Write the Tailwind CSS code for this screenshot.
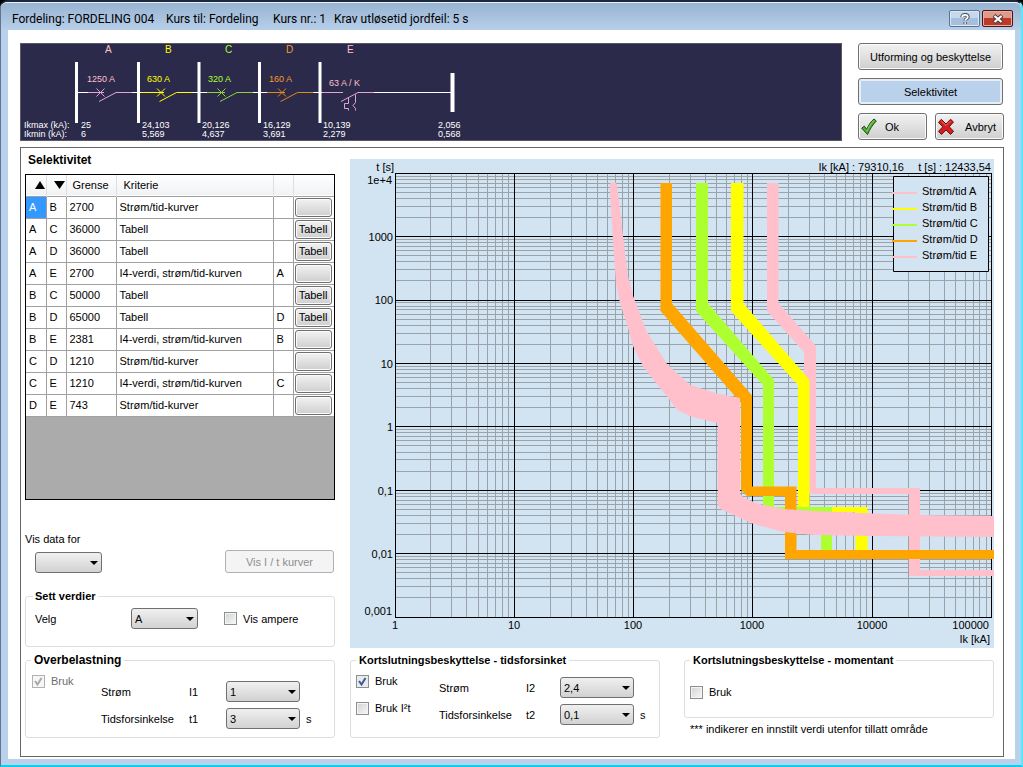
<!DOCTYPE html>
<html lang="no">
<head>
<meta charset="utf-8">
<title>Selektivitet</title>
<script src="https://cdn.jsdelivr.net/npm/@tailwindcss/browser@4"></script>
</head>
<body class="flex min-h-screen flex-col bg-black font-['Liberation_Sans',Arial,sans-serif] text-[11px] leading-[14px] text-black">
<div class="mb-px flex flex-1 flex-col rounded-t-lg border-t-2 border-r-2 border-b-2 border-l border-t-slate-800 border-r-cyan-300 border-b-cyan-400 border-l-slate-500 bg-[#b9d1ea]">
  <header class="flex h-7 items-center rounded-t-md border-t border-white/70 bg-linear-to-b from-[#98b4d2] to-[#b7cfe9] pr-2 pl-[11px]">
    <h1 class="flex flex-1 pt-1 font-[Roboto,'Noto_Sans',sans-serif] text-xs whitespace-nowrap">
      <span class="w-[154px]">Fordeling: FORDELING 004</span>
      <span class="w-[107px]">Kurs til: Fordeling</span>
      <span class="w-[61px]">Kurs nr.: 1</span>
      <span>Krav utløsetid jordfeil: 5 s</span>
    </h1>
    <div class="mt-[7px] flex gap-0.5 self-start">
      <button type="button" aria-label="Hjelp" class="flex h-[17px] w-[31px] items-center justify-center rounded-xs border border-[#5c7390] bg-linear-to-b from-[#c5d8ec] from-50% to-[#a5bfdc] to-50% shadow-[inset_0_0_0_1px_#dbe8f5]">
        <svg class="h-3 w-3" viewBox="0 0 12 12" fill="none"><path d="M3 4.200C3 2.500 4.300 1.700 6 1.700s3 .9 3 2.400C9 5.700 6.200 5.700 6.200 7.600M6.200 9v2" stroke="#3f4c5e" stroke-width="3.400"/><path d="M3.200 4.200C3.200 2.600 4.400 1.800 6 1.800s2.800.8 2.800 2.300C8.800 5.700 6.200 5.700 6.200 7.400M6.200 9.200v1.600" stroke="#fff" stroke-width="1.800"/></svg>
      </button>
      <button type="button" aria-label="Lukk" class="flex h-[17px] w-[31px] items-center justify-center rounded-xs border border-[#4b1510] bg-linear-to-b from-[#de9a8c] from-45% to-[#bc3a26] to-50% shadow-[inset_0_0_0_1px_#e9aea2]">
        <svg class="h-3 w-3" viewBox="0 0 12 12" fill="none"><path d="M2 2.500l8 7M10 2.500l-8 7" stroke="#4a3a40" stroke-width="4"/><path d="M2.500 3l7 6M9.500 3l-7 6" stroke="#fff" stroke-width="2.200"/></svg>
      </button>
    </div>
  </header>

  <main class="mr-[6px] mb-[6px] ml-[7px] flex-1 bg-white pt-[13px] pr-[11px] pb-0.5 pl-3">
    <div class="flex gap-4">
      <div class="min-w-0 flex-1 border border-[#5a5a66] bg-[#2c2a4a]">
        <svg class="block h-24 w-[820px]" viewBox="21 44 820 96" font-family="'Liberation Sans',Arial,sans-serif" font-size="9" role="img" aria-label="Enlinjeskjema">
          <g fill="#ffc0cb"><text x="105" y="53" font-size="10">A</text><text x="87" y="82">1250 A</text><text x="347" y="53" font-size="10">E</text><text x="329" y="86">63 A / K</text></g>
          <g fill="#ff0"><text x="165" y="53" font-size="10">B</text><text x="147" y="82">630 A</text></g>
          <g fill="#adff2f"><text x="225" y="53" font-size="10">C</text><text x="208" y="82">320 A</text></g>
          <g fill="#f59a2c"><text x="286" y="53" font-size="10">D</text><text x="269" y="82">160 A</text></g>
          <path d="M78 92.500h12M124 92.500h28M184 92.500h28M246 92.500h28M304 92.500h28M372 92.500h80" stroke="#fff"/>
          <g fill="none">
            <path d="M88 92.500h16M96.500 88.500l8 8M104.500 88.500l-8 8M99 101.500l17-9h16" stroke="#e0a6cf"/>
            <path d="M141 92.500h23M157 88.500l8 8M165 88.500l-8 8M159.500 101.500l17-9h16" stroke="#ff0"/>
            <path d="M207 92.500h18M217.500 88.500l8 8M225.500 88.500l-8 8M220 101.500l17-9h16" stroke="#8fd13a"/>
            <path d="M267 92.500h18M278 88.500l8 8M286 88.500l-8 8M280.500 101.500l17-9h16" stroke="#e08a1c"/>
            <path d="M322 92.500h21M341 101.500l17-9h16M348.500 98v5.500h-4v5h4v2M355.500 94.500v8l-2.500 3 2.500 3v2" stroke="#e0a6cf"/>
          </g>
          <path d="M76.500 62v61M138.500 62v61M199 62v61M259.500 62v61M320 62v61" stroke="#fff" stroke-width="3"/>
          <path d="M452.500 73v39" stroke="#fff" stroke-width="4"/>
          <g fill="#fff">
            <text x="24" y="128">Ikmax (kA):</text><text x="81" y="128">25</text><text x="142" y="128">24,103</text><text x="202" y="128">20,126</text><text x="263" y="128">16,129</text><text x="323" y="128">10,139</text><text x="438" y="128">2,056</text>
            <text x="24" y="137">Ikmin (kA):</text><text x="81" y="137">6</text><text x="142" y="137">5,569</text><text x="202" y="137">4,637</text><text x="263" y="137">3,691</text><text x="323" y="137">2,279</text><text x="438" y="137">0,568</text>
          </g>
        </svg>
      </div>
      <div class="grid w-[146px] shrink-0 grid-cols-2 grid-rows-[27px_27px_27px] gap-x-2 gap-y-2">
        <button type="button" class="col-span-2 mr-px rounded-[3px] border border-[#707070] bg-linear-to-b from-[#f2f2f2] to-[#cfcfcf] shadow-[inset_0_0_0_1px_#fbfbfb]">Utforming og beskyttelse</button>
        <button type="button" class="col-span-2 mr-px rounded-[3px] border border-[#707070] bg-[#b9d1ea] shadow-[inset_0_0_0_2px_#e6eef6]">Selektivitet</button>
        <button type="button" class="flex items-center gap-2 rounded-[3px] border border-[#707070] bg-linear-to-b from-[#f2f2f2] to-[#cfcfcf] pl-0.5 shadow-[inset_0_0_0_1px_#fbfbfb]">
          <svg class="h-[18px] w-4" viewBox="0 0 16 18"><path d="M.7 10.200l2.600-2 2.500 3.200C7.500 7.300 9.800 3.500 13 1l2.300 2C11.500 6.800 9 11 6.500 16.500z" fill="#4fae33" stroke="#1d4d12" stroke-linejoin="round"/><path d="M5.800 13.500C8 8.500 10 5 13 2.500" stroke="#8cd66b" fill="none"/></svg>
          Ok
        </button>
        <button type="button" class="flex items-center justify-between rounded-[3px] border border-[#707070] bg-linear-to-b from-[#f2f2f2] to-[#cfcfcf] pr-[7px] pl-0.5 shadow-[inset_0_0_0_1px_#fbfbfb]">
          <svg class="h-[18px] w-4" viewBox="0 0 16 18"><path d="M3.300 1.300L8 6l4.500-4.700L15.500 4l-4.300 4.800 4.400 4.400-3 3.200L8 12l-4.500 4.400-3-3 4.300-4.600L.5 4.500z" fill="#d3201f" stroke="#6b0b0b" stroke-linejoin="round"/><path d="M3.400 3L8 7.500 12.500 3" stroke="#ee7468" fill="none"/></svg>
          Avbryt
        </button>
      </div>
    </div>

    <section class="mt-1.5 grid grid-cols-[310px_minmax(0,1fr)] gap-x-[15px] border border-[#666] pt-[5px] pr-[9px] pb-[18px] pl-1">
      <div class="flex flex-col">
        <h2 class="mb-[7px] pl-[3px] text-xs leading-[14px] font-bold">Selektivitet</h2>
        <div class="h-[326px] border border-black bg-[#ababab]">
          <table class="w-full table-fixed border-collapse bg-white text-left">
            <colgroup><col class="w-5"><col class="w-5"><col class="w-[50px]"><col><col class="w-5"><col class="w-[41px]"></colgroup>
            <thead>
              <tr class="h-[21px] border-b border-[#a0a0a0] bg-linear-to-b from-white to-[#f1f2f4]">
                <th scope="col" class="border-r border-[#dedfe1] pl-2"><svg class="h-2 w-3" viewBox="0 0 12 8" role="img" aria-label="Overordnet"><path d="M1 8l5-8 5 8z"/></svg></th>
                <th scope="col" class="border-r border-[#dedfe1] pl-[6px]"><svg class="h-2 w-3" viewBox="0 0 12 8" role="img" aria-label="Underordnet"><path d="M1 0h11L6.500 8z"/></svg></th>
                <th scope="col" class="border-r border-[#dedfe1] pl-[6px] font-normal">Grense</th>
                <th scope="col" class="border-r border-[#dedfe1] pl-[7px] font-normal">Kriterie</th>
                <th class="border-r border-[#dedfe1]"></th>
                <th></th>
              </tr>
            </thead>
            <tbody id="rows"></tbody>
          </table>
          <template id="row">
            <tr class="h-[22px] border-b border-[#a0a0a0]">
              <td class="border-r border-[#a0a0a0] pl-[3px]"></td>
              <td class="border-r border-[#a0a0a0] pl-[3px]"></td>
              <td class="border-r border-[#a0a0a0] pl-[3px]"></td>
              <td class="border-r border-[#a0a0a0] pl-[3px]"></td>
              <td class="border-r border-[#a0a0a0] pl-[3px]"></td>
              <td class="pl-px"><button type="button" class="block h-[19px] w-[37px] rounded-[3px] border border-[#707070] bg-linear-to-b from-[#f2f2f2] to-[#cfcfcf] shadow-[inset_0_0_0_1px_#fbfbfb]"></button></td>
            </tr>
          </template>
        </div>

        <label for="data" class="mt-8">Vis data for</label>
        <div class="mt-1 flex items-center justify-between pr-px pl-[10px]">
          <div class="relative mt-px">
            <select id="data" class="h-[21px] w-[67px] appearance-none rounded-[3px] border border-[#707070] bg-linear-to-b from-[#f0f0f0] to-[#d2d2d2] pl-[3px]"><option></option></select>
            <svg class="pointer-events-none absolute top-[9px] right-1 h-1 w-2" viewBox="0 0 8 4"><path d="M0 0h8L4 4z"/></svg>
          </div>
          <button type="button" disabled class="h-[23px] w-[109px] rounded-[3px] border border-[#adb2b5] bg-[#f4f4f4] text-[#8e8e8e]">Vis I / t kurver</button>
        </div>

        <fieldset class="mt-4 flex h-[58px] items-start rounded-[3px] border border-[#dcdfe2] pt-[5px] pl-[9px]">
          <legend class="-ml-0.5 px-0.5 text-[11px] font-bold">Sett verdier</legend>
          <div class="flex items-center">
            <label for="velg" class="w-24">Velg</label>
            <div class="relative">
              <select id="velg" class="h-[21px] w-[67px] appearance-none rounded-[3px] border border-[#707070] bg-linear-to-b from-[#f0f0f0] to-[#d2d2d2] pl-[3px]"><option>A</option></select>
              <svg class="pointer-events-none absolute top-[9px] right-1 h-1 w-2" viewBox="0 0 8 4"><path d="M0 0h8L4 4z"/></svg>
            </div>
            <label class="ml-[26px] flex items-center gap-1.5"><input type="checkbox" class="h-[13px] w-[13px] appearance-none border border-[#8e8f8f] bg-linear-to-br from-[#d0d2d5] to-[#f8f8f8] shadow-[inset_0_0_0_1px_#f4f4f4]">Vis ampere</label>
          </div>
        </fieldset>

        <fieldset class="mt-1.5 flex h-[85px] items-start rounded-[3px] border border-[#dcdfe2] pt-[6px] pl-[6px]">
          <legend class="-ml-px px-[3px] text-xs leading-[14px] font-bold">Overbelastning</legend>
          <label class="mt-px flex w-[69px] items-center gap-1.5 text-[#6d6d6d]">
            <span class="relative flex"><input type="checkbox" checked disabled class="h-[13px] w-[13px] appearance-none border border-[#b1b1b1] bg-[#f6f6f6]"><svg class="absolute top-0 left-0 h-[13px] w-[13px]" viewBox="0 0 13 13" fill="none" stroke="#a8a8a8" stroke-width="2"><path d="M3 6l2.500 3.500L9.500 3"/></svg></span>Bruk</label>
          <div class="mt-2 grid grid-cols-[88px_37px_74px_auto] items-center gap-y-[6px]">
            <label for="i1">Strøm</label><span>I1</span>
            <div class="relative">
              <select id="i1" class="block h-[21px] w-[74px] appearance-none rounded-[3px] border border-[#707070] bg-linear-to-b from-[#f0f0f0] to-[#d2d2d2] pl-[3px]"><option>1</option></select>
              <svg class="pointer-events-none absolute top-[9px] right-1 h-1 w-2" viewBox="0 0 8 4"><path d="M0 0h8L4 4z"/></svg>
            </div><span></span>
            <label for="t1">Tidsforsinkelse</label><span>t1</span>
            <div class="relative">
              <select id="t1" class="block h-[21px] w-[74px] appearance-none rounded-[3px] border border-[#707070] bg-linear-to-b from-[#f0f0f0] to-[#d2d2d2] pl-[3px]"><option>3</option></select>
              <svg class="pointer-events-none absolute top-[9px] right-1 h-1 w-2" viewBox="0 0 8 4"><path d="M0 0h8L4 4z"/></svg>
            </div><span class="pl-[6px]">s</span>
          </div>
        </fieldset>
      </div>

      <div class="mt-[6px] flex flex-col">
        <svg class="block h-auto w-full bg-[#d2e3f1]" viewBox="350 159 644 489" font-family="'Liberation Sans',Arial,sans-serif" font-size="11" role="img" aria-label="Strøm/tid-kurver">
          <path id="minor" stroke="#9aa3aa" fill="none" shape-rendering="crispEdges"/>
          <path id="major" stroke="#000" fill="none" shape-rendering="crispEdges"/>
          <g>
            <path fill="#ffc0cb" d="M767 183h11.500v120l37.500 43v142h104v82h74v6h-85v-82H804V352l-37-41z"/>
            <path fill="#ff0" d="M731 183h12.500v120.500l66 76.500v127h58v48h-12v-43H798V385l-67-74z"/>
            <path fill="#adff2f" d="M696 183h12v120.500l66 76.500v127h58v48h-11v-43h-58V385l-67-74z"/>
            <path fill="orange" d="M660.500 183H672v120.500l80 92V486.500h44.500V550H994v9H785v-63h-38l-6-6v-87l-80.500-92z"/>
            <path fill="#ffc0cb" d="M611 182.500h4.500l1.500 2 5.700 49 5.300 43 5.300 20 13.400 35 20 32 3.500 3.500 20 18 26.500 8.500 23.300 4.500V493.500l3.500 4 14 6 26 5.500 30 2 60 2.500 47 1.500 74 1v21l-121-1-60-1-30-3-30-8-33-15-2.700-3V423.300L690 416l-13-6-7-10-10-12-16.700-21.300-10-20-6.700-23.700-6.600-20-4-20-3.300-46.300-3-52z"/>
          </g>
          <path fill="#d2e3f1" stroke="#000" d="M893.500 176.500h95v95h-95z"/>
          <g stroke-width="2" fill="none"><path stroke="#ffc0cb" d="M892 193h25M892 257h25"/><path stroke="#ff0" d="M892 209h25"/><path stroke="#adff2f" d="M892 225h25"/><path stroke="orange" d="M892 241h25"/></g>
          <g><text x="922" y="195">Strøm/tid A</text><text x="922" y="211">Strøm/tid B</text><text x="922" y="227">Strøm/tid C</text><text x="922" y="243">Strøm/tid D</text><text x="922" y="259">Strøm/tid E</text></g>
          <g text-anchor="end">
            <text x="394" y="171">t [s]</text><text x="392" y="184">1e+4</text><text x="393" y="241">1000</text><text x="393" y="304">100</text><text x="393" y="368">10</text><text x="393" y="431">1</text><text x="393" y="495">0,1</text><text x="393" y="558">0,01</text><text x="392" y="615">0,001</text>
            <text x="904" y="171">Ik [kA] : 79310,16</text><text x="991" y="171">t [s] : 12433,54</text><text x="989" y="629">100000</text><text x="990" y="643">Ik [kA]</text>
          </g>
          <g text-anchor="middle"><text x="395" y="629">1</text><text x="514" y="629">10</text><text x="633" y="629">100</text><text x="752" y="629">1000</text><text x="872" y="629">10000</text></g>
        </svg>

        <div class="mt-[5px] grid grid-cols-2 items-start gap-x-6">
          <fieldset class="flex h-[85px] items-start rounded-[3px] border border-[#dcdfe2] pt-[6px] pl-[5px]">
            <legend class="px-[3px] text-[11px] font-bold">Kortslutningsbeskyttelse - tidsforsinket</legend>
            <div class="mt-px flex w-[83px] flex-col gap-[13px]">
              <label class="flex items-center gap-1.5"><span class="relative flex"><input type="checkbox" checked class="h-[13px] w-[13px] appearance-none border border-[#8e8f8f] bg-[#e8eaee]"><svg class="pointer-events-none absolute top-0 left-0 h-[13px] w-[13px]" viewBox="0 0 13 13" fill="none" stroke="#3f5a94" stroke-width="2"><path d="M3 6l2.500 3.500L9.500 3"/></svg></span>Bruk</label>
              <label class="flex items-center gap-1.5"><input type="checkbox" class="h-[13px] w-[13px] appearance-none border border-[#8e8f8f] bg-linear-to-br from-[#d0d2d5] to-[#f8f8f8] shadow-[inset_0_0_0_1px_#f4f4f4]">Bruk I²t</label>
            </div>
            <div class="mt-1 grid grid-cols-[87px_34px_74px_auto] items-center gap-y-[6px]">
              <label for="i2">Strøm</label><span>I2</span>
              <div class="relative">
                <select id="i2" class="block h-[21px] w-[74px] appearance-none rounded-[3px] border border-[#707070] bg-linear-to-b from-[#f0f0f0] to-[#d2d2d2] pl-[3px]"><option>2,4</option></select>
                <svg class="pointer-events-none absolute top-[9px] right-1 h-1 w-2" viewBox="0 0 8 4"><path d="M0 0h8L4 4z"/></svg>
              </div><span></span>
              <label for="t2">Tidsforsinkelse</label><span>t2</span>
              <div class="relative">
                <select id="t2" class="block h-[21px] w-[74px] appearance-none rounded-[3px] border border-[#707070] bg-linear-to-b from-[#f0f0f0] to-[#d2d2d2] pl-[3px]"><option>0,1</option></select>
                <svg class="pointer-events-none absolute top-[9px] right-1 h-1 w-2" viewBox="0 0 8 4"><path d="M0 0h8L4 4z"/></svg>
              </div><span class="pl-[6px]">s</span>
            </div>
          </fieldset>
          <div>
            <fieldset class="h-[65px] rounded-[3px] border border-[#dcdfe2] pt-[18px] pl-[5px]">
              <legend class="px-[3px] text-[11px] font-bold">Kortslutningsbeskyttelse - momentant</legend>
              <label class="flex items-center gap-1.5"><input type="checkbox" class="h-[13px] w-[13px] appearance-none border border-[#8e8f8f] bg-linear-to-br from-[#d0d2d5] to-[#f8f8f8] shadow-[inset_0_0_0_1px_#f4f4f4]">Bruk</label>
            </fieldset>
            <p class="mt-1 pl-[6px]">*** indikerer en innstilt verdi utenfor tillatt område</p>
          </div>
        </div>
      </div>
    </section>
  </main>
</div>
<script>
const data = [
  ['A','B','2700','Strøm/tid-kurver','',''],
  ['A','C','36000','Tabell','','Tabell'],
  ['A','D','36000','Tabell','','Tabell'],
  ['A','E','2700','I4-verdi, strøm/tid-kurven','A',''],
  ['B','C','50000','Tabell','','Tabell'],
  ['B','D','65000','Tabell','D','Tabell'],
  ['B','E','2381','I4-verdi, strøm/tid-kurven','B',''],
  ['C','D','1210','Strøm/tid-kurver','',''],
  ['C','E','1210','I4-verdi, strøm/tid-kurven','C',''],
  ['D','E','743','Strøm/tid-kurver','','']
];
const body = document.getElementById('rows');
data.forEach((r, n) => {
  const tr = document.getElementById('row').content.cloneNode(true);
  const cells = tr.querySelectorAll('td');
  r.slice(0, 5).forEach((t, i) => { cells[i].textContent = t; });
  const b = tr.querySelector('button');
  b.textContent = r[5];
  if (!r[5]) b.setAttribute('aria-label', 'Rad ' + (n + 1));
  if (n === 0) cells[0].classList.add('bg-[#3399ff]', 'text-white');
  body.append(tr);
});
// Logarithmic grid: five decades across, seven decades down
const X = v => Math.floor(395 + v * 119.3) + 0.5;
const Y = v => Math.floor(617 - v * 63.4) + 0.5;
let minor = '', major = '';
for (let d = 0; d <= 5; d++) {
  major += `M${X(d)} 173V618`;
  if (d < 5) for (let k = 2; k < 10; k++) minor += `M${X(d + Math.log10(k))} 174V617`;
}
for (let d = 0; d <= 7; d++) {
  major += `M395 ${Y(d)}H992`;
  if (d < 7) for (let k = 2; k < 10; k++) minor += `M396 ${Y(d + Math.log10(k))}H991`;
}
document.getElementById('minor').setAttribute('d', minor);
document.getElementById('major').setAttribute('d', major);
</script>
</body>
</html>
